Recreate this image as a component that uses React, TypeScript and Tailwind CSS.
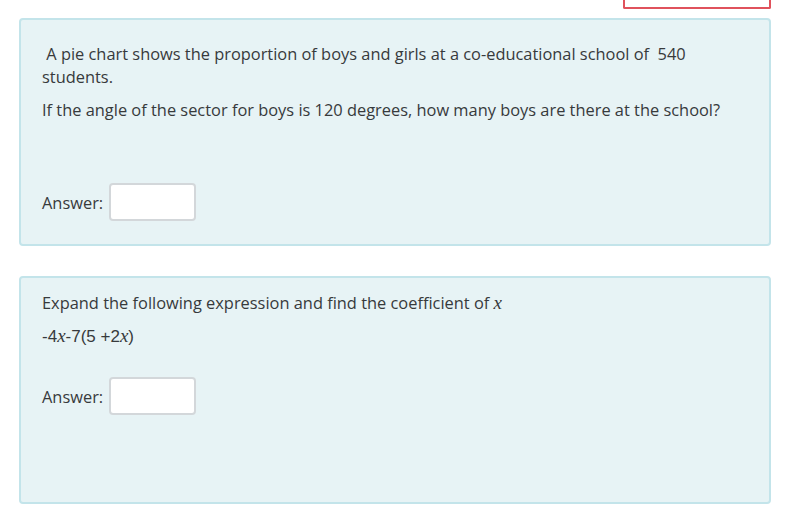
import React from "react";

const AnswerBox = () => (
  <div className="flex items-center gap-[6px]">
    <span>Answer:</span>
    <input
      type="text"
      className="h-[38px] w-[87px] rounded-[4px] border-2 border-[#d3d7da] bg-white outline-none"
    />
  </div>
);

const X = () => (
  <span className="text-[19px] italic" style={{ fontFamily: '"Liberation Serif", "DejaVu Serif", serif' }}>
    x
  </span>
);

export default function App() {
  return (
    <div
      className="min-h-[512px] bg-white text-[16.4px] leading-[23px] text-[#373a3c]"
      style={{ fontFamily: '"Open Sans", "Liberation Sans", sans-serif' }}
    >
      <div className="ml-[623px] h-[9px] w-[148px] rounded-b-[2px] border-2 border-t-0 border-[#e0525c]" />

      {/* question 1 */}
      <div className="ml-[19px] mt-[9px] h-[228px] w-[752px] rounded-[4px] border-2 border-[#c3e4ea] bg-[#e7f3f5] pl-[21px] pr-[40px] pt-[22px]">
        <p>&nbsp;A pie chart shows the proportion of boys and girls at a co-educational school of&nbsp; 540 students.</p>
        <p className="mt-[10px]">If the angle of the sector for boys is 120 degrees, how many boys are there at the school?</p>
        <div className="mt-[62px]">
          <AnswerBox />
        </div>
      </div>

      {/* question 2 */}
      <div className="ml-[19px] mt-[30px] h-[228px] w-[752px] rounded-[4px] border-2 border-[#c3e4ea] bg-[#e7f3f5] px-[21px] pt-[13px]">
        <p>
          Expand the following expression and find the coefficient of <X />
        </p>
        <p className="mt-[10px] text-[17px]" style={{ fontFamily: '"Liberation Sans", Arial, sans-serif' }}>
          -4<X />-7(5 +2<X />)
        </p>
        <div className="mt-[29px]">
          <AnswerBox />
        </div>
      </div>
    </div>
  );
}
